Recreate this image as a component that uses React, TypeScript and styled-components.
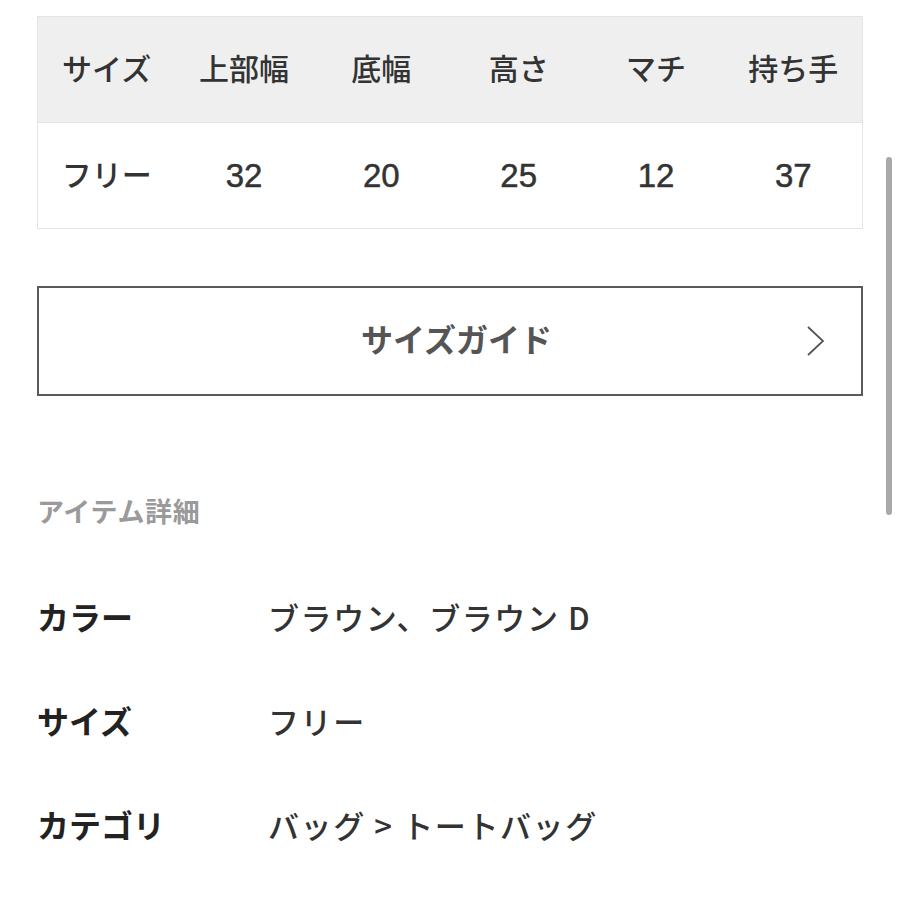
import React from "react";
import styled, { createGlobalStyle } from "styled-components";

const Global = createGlobalStyle`
  html, body { margin: 0; padding: 0; background: #fff; }
  body { font-family: "Noto Sans CJK JP", "Noto Sans", sans-serif; color: #333; }
`;

const Page = styled.div`
  position: relative;
  width: 900px;
  height: 900px;
  overflow: hidden;
  padding: 16px 37px 0;
  box-sizing: border-box;
`;

const Table = styled.div`
  display: grid;
  grid-template-columns: repeat(6, 1fr);
  border: 1px solid #e4e4e4;
`;

const Cell = styled.div<{ $head?: boolean; $num?: boolean }>`
  height: ${(p) => (p.$head ? "106px" : "105px")};
  padding-bottom: ${(p) => (p.$num ? "0" : "5px")};
  box-sizing: border-box;
  display: flex;
  align-items: center;
  justify-content: center;
  font-family: ${(p) =>
    p.$num ? `"Liberation Sans", "Noto Sans CJK JP", sans-serif` : `"Noto Sans CJK JP", sans-serif`};
  font-size: ${(p) => (p.$num ? "33px" : "30px")};
  font-weight: 500;
  color: #333;
  -webkit-text-stroke: ${(p) => (p.$num ? "0.5px #333" : "0")};
  background: ${(p) => (p.$head ? "#efefef" : "#fff")};
  border-bottom: ${(p) => (p.$head ? "1px solid #e4e4e4" : "none")};
`;

const GuideButton = styled.button`
  position: relative;
  margin-top: 57px;
  width: 100%;
  height: 110px;
  border: 2px solid #5a5a5a;
  background: #fff;
  display: flex;
  align-items: center;
  justify-content: center;
  font-family: inherit;
  font-size: 32px;
  font-weight: 700;
  color: #555;
  padding: 0 0 6px 13px;
`;

const Chevron = styled.svg`
  position: absolute;
  right: 35px;
  top: 50%;
  transform: translateY(-50%);
`;

const Heading = styled.h2`
  margin: 95px 0 0;
  font-size: 27px;
  line-height: 40px;
  font-weight: 700;
  color: #9a9a9a;
  letter-spacing: 0.7px;
`;

const DetailList = styled.dl`
  margin: 34px 0 0;
  padding: 0;
`;

const DetailRow = styled.div`
  display: grid;
  grid-template-columns: 231px 1fr;
  align-items: center;
  height: 104px;
  padding-bottom: 2px;
  box-sizing: border-box;
`;

const Label = styled.dt`
  font-size: 32px;
  font-weight: 700;
  color: #222;
`;

const Value = styled.dd`
  margin: 0;
  font-size: 31px;
  font-weight: 500;
  color: #333;
  letter-spacing: 1.6px;
`;

const ScrollThumb = styled.div`
  position: absolute;
  left: 886px;
  top: 157px;
  width: 6px;
  height: 358px;
  border-radius: 3px;
  background: #a9a9a9;
`;

const heads = ["サイズ", "上部幅", "底幅", "高さ", "マチ", "持ち手"];
const vals = ["フリー", "32", "20", "25", "12", "37"];

const details: [string, string][] = [
  ["カラー", "ブラウン、ブラウン D"],
  ["サイズ", "フリー"],
  ["カテゴリ", "バッグ > トートバッグ"],
];

export default function App() {
  return (
    <>
      <Global />
      <Page>
        <Table>
          {heads.map((h) => (
            <Cell $head key={h}>{h}</Cell>
          ))}
          {vals.map((v, i) => (
            <Cell key={i} $num={i > 0}>{v}</Cell>
          ))}
        </Table>
        <GuideButton>
          サイズガイド
          <Chevron width="20" height="31" viewBox="0 0 20 31">
            <path d="M2 1.5 L17 15.5 L2 29.5" fill="none" stroke="#555" strokeWidth="1.8" />
          </Chevron>
        </GuideButton>
        <Heading>アイテム詳細</Heading>
        <DetailList>
          {details.map(([k, v]) => (
            <DetailRow key={k}>
              <Label>{k}</Label>
              <Value>{v}</Value>
            </DetailRow>
          ))}
        </DetailList>
        <ScrollThumb />
      </Page>
    </>
  );
}
